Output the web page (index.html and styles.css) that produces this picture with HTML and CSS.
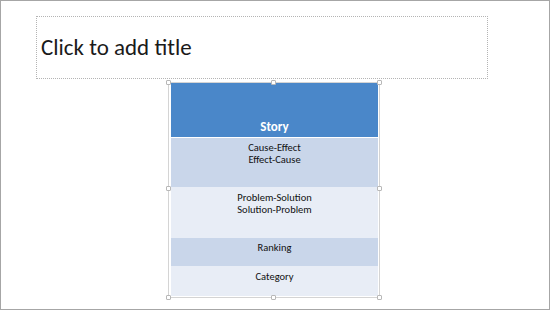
FILE: index.html
```html
<!DOCTYPE html>
<html lang="en">
<head>
<meta charset="utf-8">
<title>Slide</title>
<link rel="stylesheet" href="styles.css">
</head>
<body>
<div class="slide">
  <div class="title-box">
    <span class="title-text">Click to add title</span>
  </div>
  <div class="table-frame">
    <table class="story-table">
      <tr class="row-head"><th>Story</th></tr>
      <tr class="row-a r1"><td>Cause-Effect<br>Effect-Cause</td></tr>
      <tr class="row-b r2"><td>Problem-Solution<br>Solution-Problem</td></tr>
      <tr class="row-a r3"><td>Ranking</td></tr>
      <tr class="row-b r4"><td>Category</td></tr>
    </table>
    <span class="handle h-tl"></span>
    <span class="handle h-tm"></span>
    <span class="handle h-tr"></span>
    <span class="handle h-ml"></span>
    <span class="handle h-mr"></span>
    <span class="handle h-bl"></span>
    <span class="handle h-bm"></span>
    <span class="handle h-br"></span>
  </div>
</div>
</body>
</html>
```

FILE: styles.css
```css
html, body {
  margin: 0;
  padding: 0;
  background: #ffffff;
}

.slide {
  box-sizing: border-box;
  width: 550px;
  height: 310px;
  border: 1px solid #a6a6a6;
  background: #ffffff;
  padding-top: 15px;
  display: flex;
  flex-direction: column;
  font-family: Carlito, Lato, "Open Sans", sans-serif;
}

/* title placeholder */
.title-box {
  box-sizing: border-box;
  margin-left: 35px;
  width: 452px;
  height: 63px;
  border: 1px dotted #b4b4b4;
  display: flex;
  align-items: center;
  padding-left: 4px;
  padding-bottom: 2px;
}

.title-text {
  font-size: 23px;
  color: #1a1a1a;
}

/* selected table with its frame */
.table-frame {
  position: relative;
  box-sizing: border-box;
  margin-top: 3px;
  margin-left: 167px;
  width: 212px;
  height: 216px;
  border: 1px solid #d4d4d4;
  padding: 0 1px 0 2px;
}

.story-table {
  width: 207px;
  border-collapse: collapse;
  text-align: center;
  font-size: 10.5px;
  color: #111111;
}

.story-table th,
.story-table td {
  box-sizing: border-box;
  padding: 0;
  vertical-align: top;
  line-height: 12px;
}

.row-head th {
  height: 54px;
  background: #4a87c9;
  color: #ffffff;
  font-size: 13px;
  font-weight: bold;
  vertical-align: bottom;
  padding-bottom: 2px;
  line-height: 16px;
  border-bottom: 1px solid #ffffff;
}

.row-a td { background: #c9d6ea; }
.row-b td { background: #e8edf6; }

.r1 td { height: 50px; padding-top: 4px; }
.r2 td { height: 51px; padding-top: 5px; }
.r3 td { height: 28px; padding-top: 4px; }
.r4 td { height: 30px; padding-top: 5px; }

/* resize handles */
.handle {
  position: absolute;
  width: 5px;
  height: 5px;
  box-sizing: border-box;
  background: #ffffff;
  border: 1px solid #b8b8b8;
  border-radius: 1px;
}
.h-tl { left: -3px; top: -3px; }
.h-tm { left: 102px; top: -3px; }
.h-tr { right: -3px; top: -3px; }
.h-ml { left: -3px; top: 103px; }
.h-mr { right: -3px; top: 103px; }
.h-bl { left: -3px; bottom: -3px; }
.h-bm { left: 102px; bottom: -3px; }
.h-br { right: -3px; bottom: -3px; }
```
